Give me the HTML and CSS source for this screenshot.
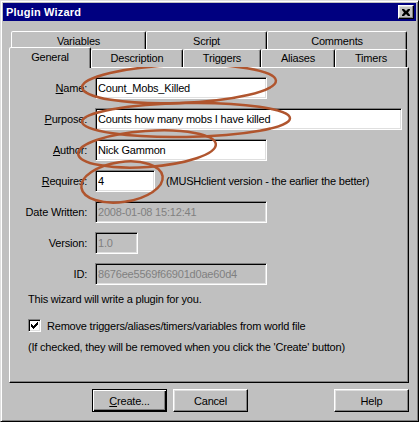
FILE: index.html
```html
<!DOCTYPE html>
<html>
<head>
<meta charset="utf-8">
<title>Plugin Wizard</title>
<link rel="stylesheet" href="styles.css">
</head>
<body>
<div class="window">
  <div class="titlebar">
    <span class="title">Plugin Wizard</span>
    <button class="close" aria-label="Close"><svg width="8" height="7" viewBox="0 0 8 7"><path d="M0 0h2l2 2 2-2h2v1L6 3.5 8 6v1H6L4 5 2 7H0V6l2-2.5L0 1z" fill="#000"/></svg></button>
  </div>
  <div class="tabs">
    <div class="tabrow back">
      <div class="tab w-var">Variables</div>
      <div class="tab w-script">Script</div>
      <div class="tab w-comments">Comments</div>
    </div>
    <div class="tabrow front">
      <div class="tab selected w-general">General</div>
      <div class="tab w-desc">Description</div>
      <div class="tab w-trig">Triggers</div>
      <div class="tab w-alias">Aliases</div>
      <div class="tab w-timers">Timers</div>
    </div>
  </div>
  <div class="panel">
    <div class="form">
      <label class="lbl"><u>N</u>ame:</label>
      <div class="field"><input class="edit w-wide" value="Count_Mobs_Killed"></div>
      <label class="lbl"><u>P</u>urpose:</label>
      <div class="field"><input class="edit w-full" value="Counts how many mobs I have killed"></div>
      <label class="lbl"><u>A</u>uthor:</label>
      <div class="field"><input class="edit w-wide" value="Nick Gammon"></div>
      <label class="lbl"><u>R</u>equires:</label>
      <div class="field"><input class="edit w-req" value="4"><span>(MUSHclient version - the earlier the better)</span></div>
      <label class="lbl">Date Written:</label>
      <div class="field"><input class="edit disabled w-wide" value="2008-01-08 15:12:41" disabled></div>
      <label class="lbl">Version:</label>
      <div class="field"><input class="edit disabled w-ver" value="1.0" disabled></div>
      <label class="lbl">ID:</label>
      <div class="field"><input class="edit disabled w-wide" value="8676ee5569f66901d0ae60d4" disabled></div>
    </div>
    <p class="note first">This wizard will write a plugin for you.</p>
    <div class="check-row">
      <span class="checkbox"><svg width="7" height="7" viewBox="0 0 7 7"><path d="M0 2h1v1h1v1h1V3h1V2h1V1h1V0h1v3H6v1H5v1H4v1H3v1H2V6H1V5H0z" fill="#000"/></svg></span>
      <span>Remove triggers/aliases/timers/variables from world file</span>
    </div>
    <p class="note last">(If checked, they will be removed when you click the 'Create' button)</p>
  </div>
  <div class="buttons">
    <button class="btn default"><u>C</u>reate...</button>
    <button class="btn cancel">Cancel</button>
    <button class="btn help">Help</button>
  </div>
  <svg class="annot" width="419" height="422" viewBox="0 0 419 422">
    <g fill="none" stroke="#b0552e" stroke-width="2.5">
      <ellipse cx="179" cy="84" rx="97" ry="19" transform="rotate(-2 179 84)"/>
      <ellipse cx="186" cy="120" rx="104" ry="17" transform="rotate(-1 186 120)"/>
      <ellipse cx="147" cy="149" rx="69" ry="18" transform="rotate(-4 147 149)"/>
      <ellipse cx="122" cy="182" rx="41" ry="20" transform="rotate(-8 122 182)"/>
    </g>
  </svg>
</div>
</body>
</html>
```
FILE: styles.css
```css
body {
  margin: 0;
  background: #c0c0c0;
  font-family: "Liberation Sans", Arial, sans-serif;
  font-size: 11px;
  letter-spacing: -0.2px;
  color: #000;
}

.window {
  position: relative;
  width: 419px;
  height: 422px;
  box-sizing: border-box;
  border: 1px solid;
  border-color: #dfdfdf #000 #000 #dfdfdf;
  box-shadow: inset 1px 1px #fff, inset -1px -1px #808080;
  padding: 2px;
  background: #c0c0c0;
}

.titlebar {
  height: 18px;
  background: #000080;
  display: flex;
  align-items: center;
  justify-content: space-between;
  padding-left: 3px;
}

.title {
  color: #fff;
  font-weight: bold;
  font-size: 11px;
  letter-spacing: 0.2px;
}

.close {
  width: 16px;
  height: 14px;
  margin: 0 2px 0 0;
  padding: 0;
  box-sizing: border-box;
  border: 1px solid;
  border-color: #fff #000 #000 #fff;
  box-shadow: inset -1px -1px #808080, inset 1px 1px #dfdfdf;
  background: #c0c0c0;
  display: flex;
  align-items: center;
  justify-content: center;
}

.tabs {
  margin: 10px 7px 0 6px;
}

.tabrow {
  display: flex;
  height: 18px;
}

.back {
  margin-left: 2px;
}

.front {
  align-items: flex-end;
  position: relative;
  z-index: 1;
}

.tab {
  box-sizing: border-box;
  height: 18px;
  border: 1px solid;
  border-bottom: 0;
  border-color: #fff #000 transparent #fff;
  border-radius: 2px 2px 0 0;
  box-shadow: inset -1px 0 #808080;
  text-align: center;
  line-height: 16px;
  background: #c0c0c0;
}

.back .tab {
  line-height: 18px;
}

.tab.selected {
  height: 21px;
  margin-bottom: -1px;
  line-height: 18px;
}

.w-var { width: 135px; }
.w-script { width: 121px; }
.w-comments { width: 140px; }
.w-general { width: 82px; }
.w-desc { width: 92px; }
.w-trig { width: 78px; }
.w-alias { width: 74px; }
.w-timers { width: 72px; }

.panel {
  margin: 0 7px 0 6px;
  height: 316px;
  box-sizing: border-box;
  border: 1px solid;
  border-color: #fff #000 #000 #fff;
  box-shadow: inset -1px -1px #808080;
  padding-top: 9px;
}

.form {
  display: grid;
  grid-template-columns: 77px auto;
  column-gap: 8px;
  row-gap: 9px;
  align-items: center;
  justify-items: start;
}

.lbl {
  justify-self: end;
}

.field {
  display: flex;
  align-items: center;
  gap: 11px;
}

.edit {
  box-sizing: border-box;
  height: 22px;
  margin: 0;
  border: 1px solid;
  border-color: #808080 #fff #fff #808080;
  box-shadow: inset 1px 1px #000, inset -1px -1px #dfdfdf;
  padding: 0 2px;
  font: inherit;
  letter-spacing: inherit;
  background: #fff;
  color: #000;
  outline: none;
  border-radius: 0;
}

.edit.disabled {
  background: #c0c0c0;
  color: #808080;
  -webkit-text-fill-color: #808080;
  opacity: 1;
}

.w-wide { width: 172px; }
.w-full { width: 307px; }
.w-req { width: 60px; }
.w-ver { width: 43px; }

.note {
  margin: 0 0 0 18px;
  line-height: 13px;
}

.note.first {
  margin-top: 8px;
}

.note.last {
  margin-top: 9px;
}

.check-row {
  display: flex;
  align-items: center;
  gap: 6px;
  margin: 13px 0 0 18px;
  height: 13px;
}

.checkbox {
  width: 13px;
  height: 13px;
  box-sizing: border-box;
  border: 1px solid;
  border-color: #808080 #fff #fff #808080;
  box-shadow: inset 1px 1px #000, inset -1px -1px #dfdfdf;
  background: #fff;
  display: flex;
  align-items: center;
  justify-content: center;
}

.buttons {
  display: flex;
  margin: 6px 7px 0 89px;
}

.btn {
  width: 75px;
  height: 23px;
  box-sizing: border-box;
  border: 1px solid;
  border-color: #fff #000 #000 #fff;
  box-shadow: inset -1px -1px #808080, inset 1px 1px #dfdfdf;
  background: #c0c0c0;
  font: inherit;
  letter-spacing: inherit;
  color: #000;
  padding: 0;
  border-radius: 0;
}

.btn.default {
  border-color: #000;
  box-shadow: inset 1px 1px #fff, inset -1px -1px #000, inset -2px -2px #808080;
}

.btn.cancel {
  margin-left: 6px;
}

.btn.help {
  margin-left: auto;
}

.annot {
  position: absolute;
  left: -1px;
  top: -1px;
  pointer-events: none;
}
```
